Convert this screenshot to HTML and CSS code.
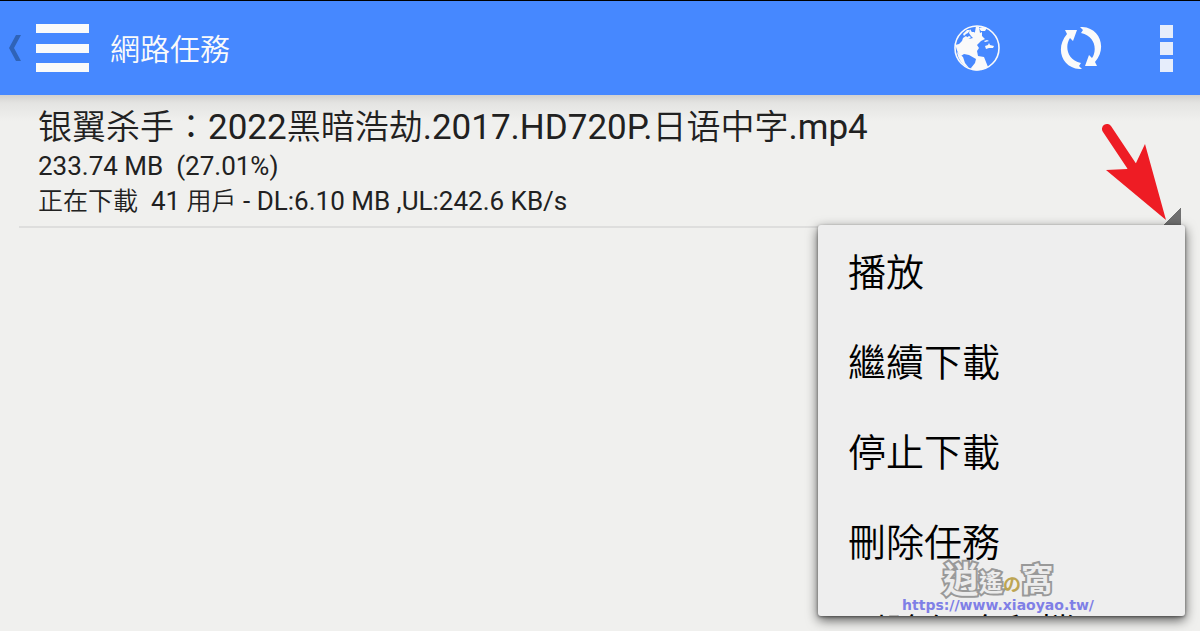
FILE: index.html
```html
<!DOCTYPE html>
<html lang="zh-Hant">
<head>
<meta charset="utf-8">
<meta name="viewport" content="width=device-width, initial-scale=1">
<title>網路任務</title>
<link rel="stylesheet" href="styles.css">
</head>
<body>
<header class="bar">
  <button class="nav" aria-label="選單">
    <svg class="back" viewBox="0 0 14 28" aria-hidden="true"><path d="M8 1h5L6 14l7 13H8L1 14z"/></svg>
    <svg class="lines" viewBox="0 0 53 48" aria-hidden="true"><path d="M0 0h53v9H0zM0 20h53v9H0zM0 39h53v9H0z"/></svg>
  </button>
  <h1 class="heading">網路任務</h1>
  <div class="actions">
    <button class="action" aria-label="瀏覽器">
      <svg class="globe" viewBox="0 0 46 46" aria-hidden="true">
        <circle cx="23" cy="23" r="22" fill="none" stroke="#fafafa" stroke-width="1.6"/>
        <path d="M2 22c1 4 2 7 5 9l3-2 5 1 7 4-1 4-4 5 1 2c5 1 12 0 16-3l-4-10-6-1-1-5 2-3-2-3 4-4 4-2-3-3 0-4-2 1-1-6-3-1-1 6-2 2-3-5-1 4 2 3 2 2-4 1-3-3-3 2-1 3-3 3-4 1z"/>
        <path d="M9 9l4-4 3 0-2 3-2 1-2 2zM12 13l3-2 2 1-2 2zM17 7l3 0 1 2-3 0zM31 21l3-1 1-2 1 2 4 1-1 2-4 0-3 1zM30 16l3-1 2 1-4 1zM25 3l4-1 4 1-2 3-4 0z"/>
        <path d="M3 27l6 5 2 6 4 5C8 40 4 34 3 27z"/>
      </svg>
    </button>
    <button class="action" aria-label="重新整理">
      <svg class="sync" viewBox="0 0 42 42" aria-hidden="true">
        <path d="M5 3h12l-4 11-3-3C5 18 6 33 21 36l-2 3 3 3C3 43-6 22 7 7z"/>
        <path d="M37 39H25l4-11 3 3C37 24 36 9 21 6l2-3-3-3C39-1 48 20 35 35z"/>
      </svg>
    </button>
    <button class="action more" aria-label="更多選項">
      <svg class="dots" viewBox="0 0 13 47" aria-hidden="true"><path d="M0 0h13v13H0zM0 17h13v13H0zM0 34h13v13H0z"/></svg>
    </button>
  </div>
</header>
<main class="tasks">
  <article class="task">
    <h2 class="name"><span class="han">银翼杀手：</span>2022<span class="han">黑暗浩劫</span>.2017.HD720P.<span class="han">日语中字</span>.mp4</h2>
    <p class="info">233.74 MB&nbsp; (27.01%)</p>
    <p class="info"><span class="han">正在下載</span>&nbsp; 41 <span class="han">用戶</span> - DL:6.10 MB ,UL:242.6 KB/s</p>
    <div class="corner"></div>
    <svg class="pointer" viewBox="0 0 66 98" aria-hidden="true"><path d="M6 6l26 39" stroke="#ee1c24" stroke-width="10" stroke-linecap="round"/><path d="M65 97L5 47l21-1 9-6 9-19z" fill="#ee1c24"/></svg>
    <div class="menu" role="menu">
      <button class="item" role="menuitem">播放</button>
      <button class="item" role="menuitem">繼續下載</button>
      <button class="item" role="menuitem">停止下載</button>
      <button class="item" role="menuitem">刪除任務</button>
      <button class="item" role="menuitem">刪除任務和檔</button>
    </div>
    <div class="mark">
      <div class="brand"><span class="big">逍</span><span class="small">遙</span><span class="no">の</span><span class="last">窩</span></div>
      <a class="site" href="https://www.xiaoyao.tw/">https://www.xiaoyao.tw/</a>
    </div>
  </article>
</main>
</body>
</html>
```
FILE: styles.css
```css
* { box-sizing: border-box; }
body {
  margin: 0;
  min-height: 100vh;
  background: #f0f0ee;
  color: #212121;
  font-family: Roboto, "Noto Sans CJK TC", sans-serif;
  overflow: hidden;
}
button {
  border: 0;
  padding: 0;
  background: none;
  color: inherit;
  font: inherit;
}
svg { display: block; }
.bar {
  display: flex;
  align-items: center;
  height: 95px;
  border-top: 1px solid #000;
  background: #4688ff;
  color: #fafafa;
  fill: #fafafa;
}
.nav {
  display: flex;
  align-items: center;
  gap: 14px;
  padding-left: 8px;
}
.back { width: 14px; height: 28px; fill: #2f63b8; }
.lines { width: 53px; height: 48px; }
.heading {
  margin: 0 0 0 21px;
  font-family: "Noto Sans CJK TC", sans-serif;
  font-size: 30px;
  line-height: 38px;
  padding-bottom: 2px;
  font-weight: 350;
}
.han {
  font-family: "Noto Sans CJK TC", sans-serif;
  font-weight: 350;
  line-height: 1;
}
.actions {
  display: flex;
  align-items: center;
  margin-left: auto;
  padding-right: 27px;
}
.action { margin-left: 60px; }
.more { margin-left: 58px; }
.globe { width: 46px; height: 46px; }
.sync { width: 42px; height: 42px; }
.dots { width: 13px; height: 47px; fill: #e6edfb; }
.tasks {
  padding: 0 19px;
  background: linear-gradient(#d2d1cf, #e4e4e2 8px, #f0f0ee 26px);
}
.task {
  position: relative;
  padding: 11px 19px 7px;
  border-bottom: 2px solid #dededd;
}
.name {
  margin: 0;
  font-size: 35px;
  line-height: 43px;
  font-weight: 400;
}
.name .han { font-family: "Noto Sans CJK SC", sans-serif; font-size: 34px; }
.info {
  margin: 0;
  font-size: 26px;
  line-height: 35px;
}
.info .han { font-size: 25px; }
.corner {
  position: absolute;
  right: 0;
  bottom: -1px;
  width: 20px;
  height: 20px;
  background: linear-gradient(135deg, transparent 50%, #707070 50%);
}
.pointer {
  position: absolute;
  right: 14px;
  top: 28px;
  width: 66px;
  height: 98px;
}
.menu {
  position: absolute;
  top: 130px;
  right: -4px;
  width: 367px;
  height: 391px;
  overflow: hidden;
  border-radius: 3px;
  background: #eee;
  box-shadow: 0 4px 12px rgba(0, 0, 0, .65), 0 1px 3px rgba(0, 0, 0, .4);
}
.item {
  display: block;
  width: 100%;
  height: 90px;
  padding: 0 30px;
  color: #000;
  font-family: "Noto Sans CJK TC", sans-serif;
  font-size: 38px;
  font-weight: 350;
  line-height: 90px;
  text-align: left;
}
.mark {
  position: absolute;
  top: 463px;
  right: 84px;
  width: 198px;
  text-align: center;
}
.brand {
  display: flex;
  align-items: flex-end;
  justify-content: center;
  height: 39px;
  color: #ececec;
  font-family: "Noto Sans CJK TC", sans-serif;
  font-weight: 700;
  line-height: 40px;
  -webkit-text-stroke: 4px #999;
  paint-order: stroke fill;
}
.big { font-size: 36px; }
.small { font-size: 24px; line-height: 32px; }
.no { font-size: 18px; line-height: 28px; color: #bda553; -webkit-text-stroke: 0; }
.last { font-size: 32px; }
.site {
  display: block;
  color: #7f7fe6;
  font-family: "DejaVu Sans", sans-serif;
  font-size: 14px;
  font-weight: 700;
  line-height: 16px;
  text-decoration: none;
}
```
